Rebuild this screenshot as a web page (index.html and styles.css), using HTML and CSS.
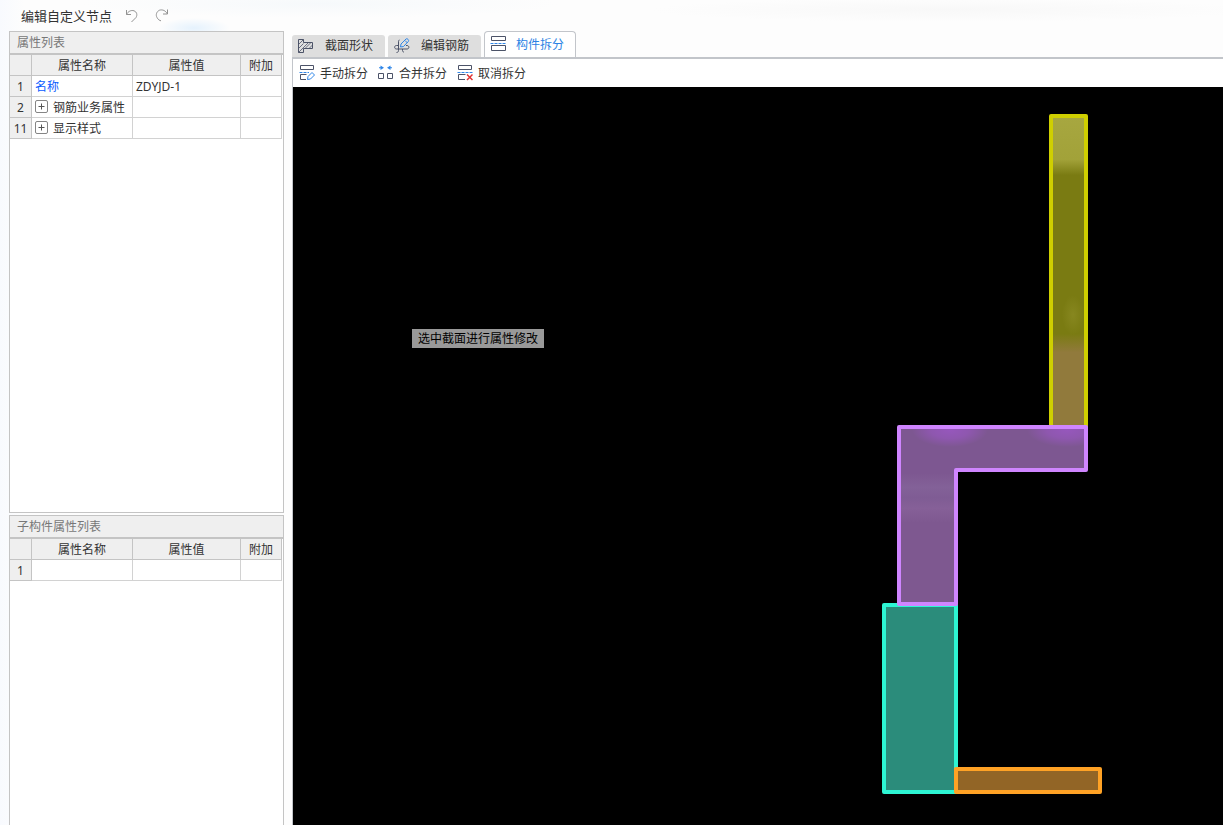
FILE: index.html
```html
<!DOCTYPE html>
<html lang="zh-CN">
<head>
<meta charset="utf-8">
<title>编辑自定义节点</title>
<link rel="stylesheet" href="styles.css">
</head>
<body class="app">
<header class="titlebar">
  <h1 class="titlebar-name">编辑自定义节点</h1>
  <button class="history-button" type="button" aria-label="撤销">
    <svg class="history-icon" viewBox="0 0 14 14"><path d="M2.500 1v4.500H7M2.500 5.500C4 2.500 7 .8 10 1.800C13 3 13.500 6 12 8.500L7.500 13"/></svg>
  </button>
  <button class="history-button" type="button" aria-label="重做">
    <svg class="history-icon" viewBox="0 0 14 14"><path d="M13.500 .5v4.500H9M13.500 5C11.500 1.500 8.500 .3 5.500 1.200C2.500 2.500 1.500 6 3 8.500C4 10.500 5.500 11.500 7 11.800"/></svg>
  </button>
</header>
<main class="workspace">
  <aside class="sidebar">
    <section class="panel panel-main">
      <h2 class="panel-title">属性列表</h2>
      <table class="grid">
        <colgroup><col class="col-index"><col class="col-name"><col class="col-value"><col class="col-extra"></colgroup>
        <thead><tr><th></th><th>属性名称</th><th>属性值</th><th>附加</th></tr></thead>
        <tbody>
          <tr><th>1</th><td class="key">名称</td><td>ZDYJD-1</td><td></td></tr>
          <tr><th>2</th><td><span class="group"><button class="expander" type="button" aria-label="展开钢筋业务属性"><svg class="expander-icon" viewBox="0 0 11 11"><path d="M2.500 5.500h6M5.500 2.500v6"/></svg></button>钢筋业务属性</span></td><td></td><td></td></tr>
          <tr><th>11</th><td><span class="group"><button class="expander" type="button" aria-label="展开显示样式"><svg class="expander-icon" viewBox="0 0 11 11"><path d="M2.500 5.500h6M5.500 2.500v6"/></svg></button>显示样式</span></td><td></td><td></td></tr>
        </tbody>
      </table>
    </section>
    <section class="panel panel-child">
      <h2 class="panel-title">子构件属性列表</h2>
      <table class="grid">
        <colgroup><col class="col-index"><col class="col-name"><col class="col-value"><col class="col-extra"></colgroup>
        <thead><tr><th></th><th>属性名称</th><th>属性值</th><th>附加</th></tr></thead>
        <tbody><tr><th>1</th><td></td><td></td><td></td></tr></tbody>
      </table>
    </section>
  </aside>
  <section class="editor">
    <div class="tabs" role="tablist">
      <button class="tab" type="button" role="tab" aria-selected="false">
        <svg class="icon" viewBox="0 0 16 16"><path class="dark" d="M.5 1.500h5v3h9v6h-9v4h-5z"/><path class="dark hatch" d="M.5 6.500l5-5M.5 10.500l5-5M.5 14.500l10-10M7 10.500l6-6M11 10.500l3.500-3.500"/></svg>
        截面形状
      </button>
      <button class="tab" type="button" role="tab" aria-selected="false">
        <svg class="icon" viewBox="0 0 16 16"><path class="dark" d="M5.500 2C4.500 2 4.500 3 4.500 4v8.500c0 1.500-1 2-2 2M4.500 7.500H2.500c-2.500 0-2.500 3.500 0 3.500H13c2.500 0 2.500-3.500 0-3.500h-1M8.500 11v1.500c0 1 .5 1.500 1.500 1.500"/><path class="blue" d="M6.500 9l.5-3L12 1c1-1 3.500 1 2.300 2.500L9.500 8.500zM11 2.500L13.500 5"/></svg>
        编辑钢筋
      </button>
      <button class="tab tab-active" type="button" role="tab" aria-selected="true">
        <svg class="icon" viewBox="0 0 16 16"><path class="dark" d="M1.500 .5h14v4h-14zM1.500 9.500h14v5h-14z"/><path class="blue" d="M.5 7.500H16" stroke-dasharray="3 1"/></svg>
        构件拆分
      </button>
    </div>
    <div class="toolbar">
      <button class="tool" type="button">
        <svg class="icon" viewBox="0 0 16 16"><path class="dark" d="M1.500 .5h13v4h-13zM7.500 9.500h-6v5H7"/><path class="blue" d="M.5 7.500H10" stroke-dasharray="3 1"/><path class="blue" d="M8.500 14.500l.5-3L13 7.500l2.500 2.500L11.500 14z"/></svg>
        手动拆分
      </button>
      <button class="tool" type="button">
        <svg class="icon" viewBox="0 0 16 16"><path class="dark" d="M.5 8.500h5v5h-5zM9.500 8.500h5v5h-5z"/><path class="blue-fill" d="M2.500 .5L6 2.800 2.500 5V3.300H1v-1h1.500zM12.500 .5L9 2.800 12.500 5V3.300H14v-1h-1.500z"/></svg>
        合并拆分
      </button>
      <button class="tool" type="button">
        <svg class="icon" viewBox="0 0 16 16"><path class="dark" d="M1.500 .5h13v4h-13zM8.500 9.500h-7v5H8"/><path class="blue" d="M.5 7.500H16" stroke-dasharray="3 1"/><path class="red" d="M10 9.500l5.500 5.500M15.500 9.500L10 15"/></svg>
        取消拆分
      </button>
    </div>
    <div class="canvas">
      <svg class="drawing" role="img" aria-label="节点截面">
        <defs>
          <linearGradient id="olive" x1="0" y1="0" x2="0" y2="1">
            <stop offset="0" stop-color="#a7a740"/><stop offset=".14" stop-color="#a2a239"/>
            <stop offset=".19" stop-color="#7a7b12"/><stop offset=".7" stop-color="#7a7b12"/>
            <stop offset=".76" stop-color="#917a3c"/><stop offset="1" stop-color="#917a3c"/>
          </linearGradient>
          <linearGradient id="plum" x1="0" y1="0" x2="0" y2="1">
            <stop offset="0" stop-color="#7d5791"/><stop offset=".26" stop-color="#7d5791"/>
            <stop offset=".34" stop-color="#836198"/><stop offset=".4" stop-color="#7f5c94"/>
            <stop offset=".46" stop-color="#866098"/><stop offset=".54" stop-color="#7e5890"/>
            <stop offset="1" stop-color="#7e5890"/>
          </linearGradient>
          <radialGradient id="violet"><stop offset="0" stop-color="#9657bc"/><stop offset=".5" stop-color="#9657bc" stop-opacity=".7"/><stop offset="1" stop-color="#9657bc" stop-opacity="0"/></radialGradient>
          <radialGradient id="moss"><stop offset="0" stop-color="#87871f"/><stop offset="1" stop-color="#87871f" stop-opacity="0"/></radialGradient>
          <clipPath id="beam"><path d="M606 340h187v43H663v134h-57z"/></clipPath>
        </defs>
        <path class="shape" fill="url(#olive)" stroke="#cfcf00" d="M758 29h35v311h-35z"/>
        <ellipse fill="url(#moss)" cx="780" cy="228" rx="11" ry="20"/>
        <path class="shape" fill="#2b8c7b" stroke="#2df5d3" d="M591 518h72v187h-72z"/>
        <path fill="url(#plum)" d="M606 340h187v43H663v134h-57z"/>
        <g clip-path="url(#beam)"><ellipse fill="url(#violet)" cx="657" cy="343" rx="38" ry="17"/><ellipse fill="url(#violet)" cx="774" cy="343" rx="40" ry="17"/></g>
        <path class="shape" fill="none" stroke="#cf85ff" d="M606 340h187v43H663v134h-57z"/>
        <path class="shape" fill="#926526" stroke="#ffa225" d="M663 682h144v23H663z"/>
      </svg>
      <span class="hint">选中截面进行属性修改</span>
    </div>
  </section>
</main>
</body>
</html>
```

FILE: styles.css
```css
* {
  box-sizing: border-box;
}

.app {
  display: flex;
  flex-direction: column;
  height: 100vh;
  margin: 0;
  overflow: hidden;
  color: #333;
  font: 12px/20px "Noto Sans", "Noto Sans CJK SC", sans-serif;
  background:
    radial-gradient(ellipse 36px 10px at 194px 28px, #e5f2fd, transparent),
    radial-gradient(ellipse 240px 14px at 320px 4px, #f6f9fb, transparent),
    radial-gradient(ellipse 300px 12px at 950px 10px, #f8f8f8, transparent),
    linear-gradient(90deg, #f8fafe, #fdfdfd 24px);
}

button {
  padding: 0;
  border: 0;
  background: none;
  color: inherit;
  font: inherit;
}

.titlebar {
  display: flex;
  align-items: center;
  flex: none;
  gap: 16px;
  height: 31px;
  padding-left: 21px;
}

.titlebar-name {
  margin: 0 -4px 0 0;
  font-size: 13px;
  font-weight: 400;
}

.history-button {
  display: flex;
}

.history-icon {
  width: 14px;
  height: 14px;
  fill: none;
  stroke: #929292;
}

.workspace {
  display: flex;
  flex: 1;
  gap: 8px;
  min-height: 0;
  padding-left: 9px;
}

.sidebar {
  display: flex;
  flex-direction: column;
  flex: none;
  gap: 2px;
  width: 275px;
}

.panel {
  border: 1px solid #c4c4c4;
  background: #fff;
}

.panel-main {
  flex: 482 1 0;
}

.panel-child {
  flex: 310 1 0;
  border-bottom: 0;
}

.panel-title {
  height: 23px;
  margin: 0;
  padding-left: 7px;
  border-bottom: 2px solid #c4c4c4;
  background: #efefef;
  color: #777;
  font-size: 12px;
  font-weight: 400;
  line-height: 22px;
}

.grid {
  width: 272px;
  table-layout: fixed;
  border-spacing: 0;
}

.col-index {
  width: 22px;
}

.col-name {
  width: 101px;
}

.col-value {
  width: 108px;
}

.col-extra {
  width: 41px;
}

.grid th,
.grid td {
  height: 21px;
  padding: 2px 0 0;
  border: solid #d2d2d2;
  border-width: 0 1px 1px 0;
  font-weight: 400;
  line-height: 18px;
  white-space: nowrap;
}

.grid th {
  border-color: #c4c4c4;
  background: #efefef;
  text-align: center;
}

.grid td {
  padding-left: 3px;
}

.grid .key {
  color: #0a5cff;
}

.group {
  display: flex;
  align-items: center;
  gap: 6px;
}

.expander {
  display: flex;
  width: 13px;
  height: 13px;
  margin: 0 -1px 3px 0;
  border: 1px solid #858585;
  border-radius: 2px;
}

.expander-icon {
  width: 11px;
  height: 11px;
  fill: none;
  stroke: #555;
}

.editor {
  display: flex;
  flex-direction: column;
  flex: 1;
  min-width: 0;
}

.tabs {
  display: flex;
  align-items: flex-end;
  gap: 3px;
  height: 26px;
}

.tab {
  display: flex;
  align-items: center;
  gap: 11px;
  height: 22px;
  padding: 0 12px 0 6px;
  border-radius: 3px 3px 0 0;
  background: #dedede;
}

.tab .icon {
  margin-bottom: 1px;
}

.tab-active {
  z-index: 1;
  gap: 10px;
  height: 26px;
  padding: 0 11px 0 5px;
  border: 1px solid #c2c5ca;
  border-bottom: 0;
  border-radius: 4px 4px 0 0;
  background: #fff;
  color: #2a82e4;
}

.icon {
  flex: none;
  width: 16px;
  height: 16px;
  fill: none;
}

.dark {
  stroke: #4c5368;
}

.hatch {
  stroke-width: 0.8;
}

.blue {
  stroke: #2f86e8;
}

.blue-fill {
  fill: #2f86e8;
}

.red {
  stroke: #e03434;
  stroke-width: 1.5;
}

.toolbar {
  display: flex;
  align-items: center;
  gap: 10px;
  height: 30px;
  padding: 2px 0 0 6px;
  border-top: 2px solid #c2c5ca;
  border-left: 1px solid #c2c5ca;
  background: #fff;
}

.tool {
  display: flex;
  align-items: center;
  gap: 5px;
}

.tool .icon {
  margin-bottom: 2px;
}

.canvas {
  position: relative;
  flex: 1;
  min-height: 0;
  border-left: 1px solid #c2c5ca;
  background: #000;
}

.drawing {
  display: block;
  width: 100%;
  height: 100%;
}

.shape {
  stroke-width: 4;
  stroke-linejoin: round;
}

.hint {
  position: absolute;
  top: 242px;
  left: 119px;
  padding: 0 6px;
  background: #999;
  color: #000;
  line-height: 19px;
}
```
